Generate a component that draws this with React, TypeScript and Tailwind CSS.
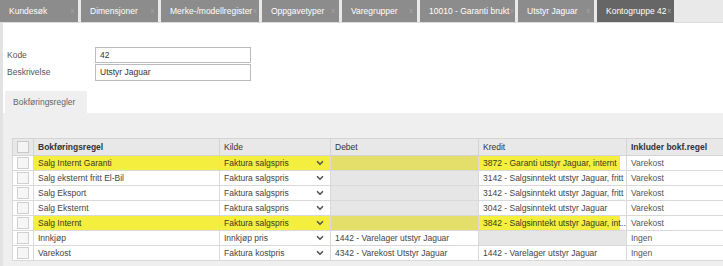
import { ChevronDown } from "lucide-react";

const tabs = [
  { label: "Kundesøk", w: 78 },
  { label: "Dimensjoner", w: 77 },
  { label: "Merke-/modellregister", w: 98 },
  { label: "Oppgavetyper", w: 77 },
  { label: "Varegrupper", w: 75 },
  { label: "10010 - Garanti brukt", w: 95 },
  { label: "Utstyr Jaguar", w: 76 },
  { label: "Kontogruppe 42", w: 77, active: true },
];

type Row = {
  regel: string;
  kilde: string;
  debet?: string;
  kredit?: string;
  inkluder: string;
  hl?: boolean;
};

const rows: Row[] = [
  { regel: "Salg Internt Garanti", kilde: "Faktura salgspris", kredit: "3872 - Garanti utstyr Jaguar, internt", inkluder: "Varekost", hl: true },
  { regel: "Salg eksternt fritt El-Bil", kilde: "Faktura salgspris", kredit: "3142 - Salgsinntekt utstyr Jaguar, fritt", inkluder: "Varekost" },
  { regel: "Salg Eksport", kilde: "Faktura salgspris", kredit: "3142 - Salgsinntekt utstyr Jaguar, fritt", inkluder: "Varekost" },
  { regel: "Salg Eksternt", kilde: "Faktura salgspris", kredit: "3042 - Salgsinntekt utstyr Jaguar", inkluder: "Varekost" },
  { regel: "Salg Internt", kilde: "Faktura salgspris", kredit: "3842 - Salgsinntekt utstyr Jaguar, int…", inkluder: "Varekost", hl: true },
  { regel: "Innkjøp", kilde: "Innkjøp pris", debet: "1442 - Varelager utstyr Jaguar", inkluder: "Ingen" },
  { regel: "Varekost", kilde: "Faktura kostpris", debet: "4342 - Varekost Utstyr Jaguar", kredit: "1442 - Varelager utstyr Jaguar", inkluder: "Ingen" },
];

function Cell({ children, className = "" }: { children?: React.ReactNode; className?: string }) {
  return (
    <td className={`h-[15px] border border-[#d9d9d9] px-[4px] py-0 whitespace-nowrap overflow-hidden leading-[14px] ${className}`}>
      {children}
    </td>
  );
}

export default function App() {
  return (
    <div
      className="w-[723px] h-[266px] overflow-hidden bg-white text-[8.5px] text-[#444]"
      style={{ fontFamily: '"Liberation Sans", Arial, sans-serif' }}
    >
      <div className="flex h-[23px] bg-[#e9e9e9] border-b border-[#dcdcdc]">
        {tabs.map((t) => (
          <div
            key={t.label}
            style={{ width: t.w }}
            className={`mr-[3px] flex shrink-0 items-center pl-[9px] pr-[4px] text-white whitespace-nowrap overflow-hidden ${
              t.active ? "bg-[#666666]" : "bg-[#8c8c8c]"
            }`}
          >
            <span>{t.label}</span>
            <span className="ml-auto pl-[1px] text-[7px] text-[#a8a8a8]">x</span>
          </div>
        ))}
      </div>

      <div className="flex h-[243px] border-l-[3px] border-[#e2e2e2]">
        <div className="flex-1 flex flex-col">
          <div className="pt-[24px] pl-[4px] flex flex-col gap-[1px]">
            <div className="flex items-center h-[16px]">
              <span className="w-[88px] text-[#555]">Kode</span>
              <div className="w-[156px] h-[16px] border border-[#bcbcbc] px-[4px] leading-[14px] text-[#333]">42</div>
            </div>
            <div className="flex items-center h-[17px]">
              <span className="w-[88px] text-[#555]">Beskrivelse</span>
              <div className="w-[156px] h-[17px] border border-[#bcbcbc] px-[4px] leading-[15px] text-[#333]">Utstyr Jaguar</div>
            </div>
          </div>

          <div className="mt-[10px] pl-[2px]">
            <div className="w-[82px] h-[22px] bg-[#efefef] pl-[8px] leading-[22px] text-[#666]">Bokføringsregler</div>
          </div>

          <div className="flex-1 bg-[#efefef] pl-[9px] pt-[25px]">
            <table className="w-[720px] table-fixed border-collapse bg-white">
              <colgroup>
                <col className="w-[21px]" />
                <col className="w-[186px]" />
                <col className="w-[111px]" />
                <col className="w-[148px]" />
                <col className="w-[148px]" />
                <col className="w-[106px]" />
              </colgroup>
              <thead>
                <tr className="bg-[#e8e8e8] text-[#333] font-bold whitespace-nowrap">
                  <th className="h-[17px] border border-[#d4d4d4] p-0">
                    <div className="mx-auto w-[12px] h-[12px] border border-[#c8c8c8] bg-[#f4f4f4]" />
                  </th>
                  <th className="border border-[#d4d4d4] px-[4px] text-left">Bokføringsregel</th>
                  <th className="border border-[#d4d4d4] px-[4px] text-left font-normal">Kilde</th>
                  <th className="border border-[#d4d4d4] px-[4px] text-left font-normal">Debet</th>
                  <th className="border border-[#d4d4d4] px-[4px] text-left font-normal">Kredit</th>
                  <th className="border border-[#d4d4d4] px-[4px] text-left">Inkluder bokf.regel</th>
                </tr>
              </thead>
              <tbody>
                {rows.map((r) => (
                  <tr key={r.regel}>
                    <td className="h-[15px] border border-[#d9d9d9] p-0">
                      <div className="mx-auto w-[12px] h-[12px] border border-[#cfcfcf] bg-[#f6f6f6]" />
                    </td>
                    <Cell className={r.hl ? "bg-[#f4ef3e] text-[#3a3a20]" : ""}>{r.regel}</Cell>
                    <Cell className={r.hl ? "bg-[#f4ef3e] text-[#3a3a20]" : ""}>
                      <div className="flex items-center justify-between">
                        <span>{r.kilde}</span>
                        <ChevronDown size={10} strokeWidth={4} className="text-[#555] mr-[1px]" />
                      </div>
                    </Cell>
                    <Cell className={r.debet ? "" : r.hl ? "bg-[#e3df6a]" : "bg-[#e6e6e6]"}>{r.debet}</Cell>
                    <Cell className={r.kredit ? "" : "bg-[#e6e6e6]"}>
                      {r.kredit && (
                        <span className={r.hl ? "block -mx-[4px] px-[4px] mr-[2px] bg-[#f4ef3e] text-[#3a3a20]" : ""}>
                          {r.kredit}
                        </span>
                      )}
                    </Cell>
                    <Cell className="text-[#555]">{r.inkluder}</Cell>
                  </tr>
                ))}
              </tbody>
            </table>
          </div>
        </div>
      </div>
    </div>
  );
}
